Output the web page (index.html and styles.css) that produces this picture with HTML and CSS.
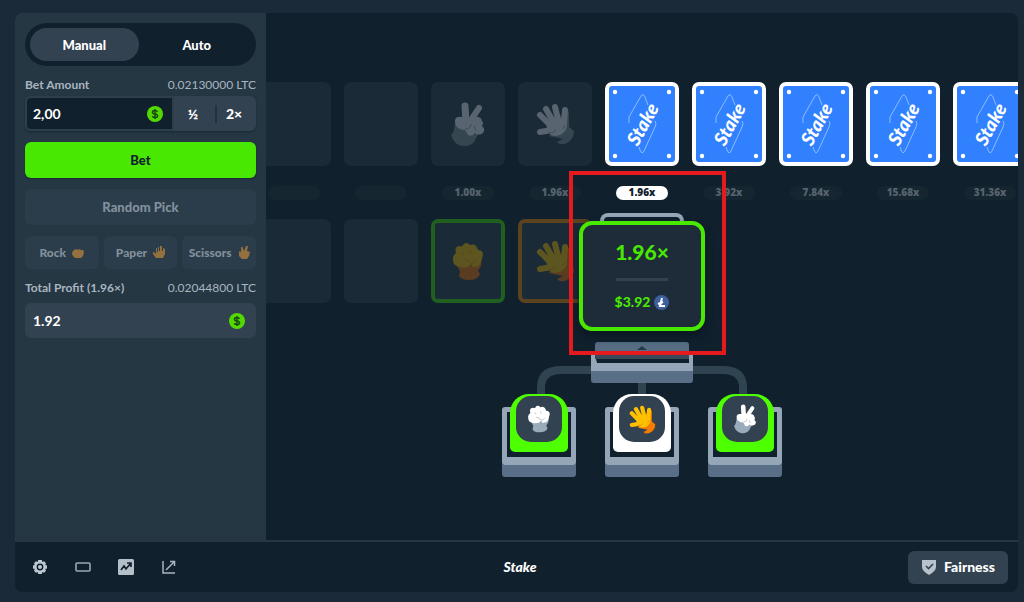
FILE: index.html
```
<!DOCTYPE html>
<html lang="en">
<head>
<meta charset="utf-8">
<meta name="viewport" content="width=device-width, initial-scale=1">
<title>Stake</title>
<link rel="stylesheet" href="styles.css">
</head>
<body>
<svg class="defs" aria-hidden="true">
  <symbol id="scissors" viewBox="0 0 35 45">
    <path class="wrist" d="M4 22L3 28Q2 32 0 33Q3 43 12 44Q22 45 25 36L29 30L25 22Z"/>
    <path class="stroke-hand" d="M14 4L15 20" stroke-width="7"/>
    <path class="stroke-hand" d="M28 6L20 18" stroke-width="6"/>
    <path class="hand" d="M4 18Q5 14 11 15L23 15Q30 14 31 19Q33 21 31 24Q35 27 32 31Q28 34 24 31Q21 35 17 33L14 28Q3 27 4 18Z"/>
    <path class="crease" d="M14 27Q20 27 20 22M23 24L25 29"/>
  </symbol>
  <symbol id="paper" viewBox="0 0 39 42">
    <path class="wrist" d="M27 9Q30 3 33 9L33 24L38 28Q38 36 31 40Q24 43 21 39L27 36L13 33Z"/>
    <path class="stroke-hand" d="M4 12L14 22M10 6L18 20M19 4L23 20M29 7L28 21M4 29L16 27" stroke-width="6"/>
    <path class="hand" d="M10 19L19 14L30 17L31 24Q28 33 18 33Q11 32 10 19Z"/>
    <path class="crease" d="M12 30Q17 31 20 27M27 26L29 22"/>
  </symbol>
  <symbol id="rock" viewBox="0 0 32 39">
    <path class="wrist" d="M3 20L30 15L29 24L26 29L28 32Q26 38 17 38Q9 38 7 34L8 29Z"/>
    <path class="hand" d="M1 18Q0 14 4 11Q2 4 8 4Q11 5 11 3Q14-1 18 3Q24 1 26 8Q31 8 31 13L29 20Q28 25 21 25L19 22Q15 27 8 25Q1 24 1 18Z"/>
    <path class="crease" d="M12 17Q17 17 18 21Q22 22 24 18M10 10L12 13M18 9L19 12"/>
  </symbol>
  <symbol id="card-back" viewBox="0 0 64 74">
    <g fill="#fff"><circle cx="5" cy="5" r="2.2"/><circle cx="59" cy="5" r="2.2"/><circle cx="5" cy="69" r="2.2"/><circle cx="59" cy="69" r="2.2"/></g>
    <path d="M19 36V30L31 9Q33 6 35 10L38 18M45 34Q47 36 45 40L34 64Q32 68 30 63L29 60" fill="none" stroke="#8ebcff" stroke-width="1"/>
  </symbol>
  <symbol id="dollar" viewBox="0 0 16 16">
    <circle cx="8" cy="8" r="8" fill="#54d900"/>
    <path d="M10.6 5.8Q9.8 4.5 8 4.5Q5.5 4.5 5.5 6.2Q5.5 7.6 8 8Q10.6 8.4 10.6 10Q10.6 11.6 8 11.6Q6 11.6 5.3 10.1M8 3V13" fill="none" stroke="#174a17" stroke-width="1.5"/>
  </symbol>
</svg>

<main class="app">
  <form class="sidebar">
    <div class="tabs">
      <button type="button" class="tab tab-active">Manual</button>
      <button type="button" class="tab">Auto</button>
    </div>
    <div class="field">
      <div class="field-head"><label for="bet">Bet Amount</label><span>0.02130000 LTC</span></div>
      <div class="bet-row">
        <div class="input-box"><input id="bet" type="text" value="2,00"><svg class="coin"><use href="#dollar"/></svg></div>
        <button type="button" class="step">½</button>
        <button type="button" class="step">2×</button>
      </div>
    </div>
    <button type="button" class="bet-button">Bet</button>
    <button type="button" class="muted random">Random Pick</button>
    <div class="picks">
      <button type="button" class="muted">Rock
        <svg class="emoji" viewBox="0 0 12 13"><path d="M0 8Q0 5 2 4L4 3L6 4L7 3L9 4L11 4L12 6L11 10L9 12H3L1 10Z"/></svg></button>
      <button type="button" class="muted">Paper
        <svg class="emoji" viewBox="0 0 12 13"><path d="M3 12L0 8V6H1L3 8V2H4V6H5V1H6V5H7V0H9V5H10V2L12 3V8L10 12Z"/></svg></button>
      <button type="button" class="muted">Scissors
        <svg class="emoji" viewBox="0 0 12 13"><path d="M1 5L3 6V1H4V0L6 5L8 0H10L9 5L12 6L11 10L9 13H4L1 10Z"/></svg></button>
    </div>
    <div class="field profit">
      <div class="field-head"><label for="profit">Total Profit (1.96×)</label><span>0.02044800 LTC</span></div>
      <div class="input-box readonly"><input id="profit" type="text" value="1.92" readonly><svg class="coin"><use href="#dollar"/></svg></div>
    </div>
  </form>

  <section class="game">
    <div class="strip">
      <div class="slot"><div class="card"></div><span class="pill"></span><div class="card"></div></div>
      <div class="slot"><div class="card"></div><span class="pill"></span><div class="card"></div></div>
      <div class="slot"><div class="card"><svg class="sign sign-scissors"><use href="#scissors"/></svg></div><span class="pill">1.00x</span><div class="card card-win"><svg class="sign sign-rock"><use href="#rock"/></svg></div></div>
      <div class="slot"><div class="card"><svg class="sign sign-paper"><use href="#paper"/></svg></div><span class="pill">1.96x</span><div class="card card-draw"><svg class="sign sign-paper"><use href="#paper"/></svg></div></div>
      <div class="slot"><div class="card card-back"><svg><use href="#card-back"/></svg><span class="back-word">Stake</span></div><span class="pill pill-active">1.96x</span></div>
      <div class="slot"><div class="card card-back"><svg><use href="#card-back"/></svg><span class="back-word">Stake</span></div><span class="pill">3.92x</span></div>
      <div class="slot"><div class="card card-back"><svg><use href="#card-back"/></svg><span class="back-word">Stake</span></div><span class="pill">7.84x</span></div>
      <div class="slot"><div class="card card-back"><svg><use href="#card-back"/></svg><span class="back-word">Stake</span></div><span class="pill">15.68x</span></div>
      <div class="slot"><div class="card card-back"><svg><use href="#card-back"/></svg><span class="back-word">Stake</span></div><span class="pill">31.36x</span></div>
    </div>

    <div class="machine">
      <div class="arch"></div>
      <div class="result">
        <strong class="multiplier">1.96×</strong>
        <span class="rule"></span>
        <div class="payout">$3.92
          <svg class="litecoin" viewBox="0 0 15 15"><circle cx="7.5" cy="7.5" r="7.5" fill="#3c5f9f"/><path d="M8 3L6 11H11M4 9L9 7" fill="none" stroke="#fff" stroke-width="2"/></svg>
        </div>
        <span class="highlight"></span>
      </div>
      <svg class="head" viewBox="0 0 210 52">
        <path d="M4 52V46Q4 28 24 28H186Q206 28 206 46V52M105 28V52" fill="none" stroke="#304350" stroke-width="8"/>
        <path d="M54 28H156V38Q156 41 153 41H57Q54 41 54 38Z" fill="#586f87"/>
        <path d="M54 13H156V29H54Z" fill="#94a6b8"/>
        <path d="M58 13H152V21H60Z" fill="#10202d"/>
        <path d="M58 3Q58 0 61 0H149Q152 0 152 3V13H58Z" fill="#566d84"/>
        <path d="M58 13H152V17H58Z" fill="#374a5a"/>
        <path d="M100 8L105 4L110 8Z" fill="#263746"/>
      </svg>
      <div class="pads">
        <div class="pad"><span class="base"></span><button type="button" class="key key-green" aria-label="Rock"><span class="face"><svg class="face-rock"><use href="#rock"/></svg></span></button></div>
        <div class="pad"><span class="base"></span><button type="button" class="key key-gold" aria-label="Paper"><span class="face"><svg class="face-paper"><use href="#paper"/></svg></span></button></div>
        <div class="pad"><span class="base"></span><button type="button" class="key key-green" aria-label="Scissors"><span class="face"><svg class="face-scissors"><use href="#scissors"/></svg></span></button></div>
      </div>
    </div>
  </section>

  <footer class="footer">
    <div class="tools">
      <button type="button" aria-label="Settings"><svg viewBox="0 0 16 16"><path fill="#bfc9d3" fill-rule="evenodd" d="M6.2 1H9.8L10.3 3L12 2.3L14 4.3L13.2 6L15 6.5V9.5L13.2 10L14 11.7L12 13.7L10.3 13L9.8 15H6.2L5.7 13L4 13.7L2 11.7L2.8 10L1 9.5V6.5L2.8 6L2 4.3L4 2.3L5.7 3ZM8 4.6A3.4 3.4 0 1 0 8 11.4A3.4 3.4 0 1 0 8 4.6ZM8 6A2 2 0 1 1 8 10A2 2 0 1 1 8 6Z"/></svg></button>
      <button type="button" aria-label="Theatre mode"><svg viewBox="0 0 16 16"><rect x="1" y="4" width="14" height="8" rx="1" fill="none" stroke="#9aa8b5" stroke-width="1.6"/></svg></button>
      <button type="button" aria-label="Live stats"><svg viewBox="0 0 16 16"><rect width="16" height="16" rx="1.5" fill="#b5bfc9"/><path d="M3 11L6 7L8 10L12.5 4.5M9 4H13V8" fill="none" stroke="#10202d" stroke-width="1.6"/></svg></button>
      <button type="button" aria-label="Share"><svg viewBox="0 0 16 16"><path d="M2 2V14H14M5 11L13 3M9 2.5H13.5V7" fill="none" stroke="#a9b5c0" stroke-width="1.5"/></svg></button>
    </div>
    <a class="logo" href="#">Stake</a>
    <button type="button" class="fairness"><svg viewBox="0 0 16 16"><path d="M1 1H15V8Q15 12 8 16Q1 12 1 8Z" fill="#b8c2cc"/><path d="M5 7L7.5 9.5L12 5" fill="none" stroke="#304350" stroke-width="1.6"/></svg>Fairness</button>
  </footer>
</main>
</body>
</html>
```
FILE: styles.css
```
* { box-sizing: border-box; }

body {
  margin: 0;
  min-height: 100vh;
  display: flex;
  padding: 13px 6px 10px 15px;
  background: #1b2a38;
  color: #fff;
  font: 12px/16px Lato, "Open Sans", sans-serif;
}

button, input { font: inherit; color: inherit; border: 0; margin: 0; padding: 0; background: none; }
button { font-weight: 900; cursor: pointer; }
svg { display: block; flex: none; }
.defs { position: absolute; width: 0; height: 0; }

.app {
  flex: 1;
  min-width: 0;
  display: grid;
  grid-template: 1fr auto / 251px minmax(0, 1fr);
  border-radius: 7px;
  overflow: hidden;
  background: #10202d;
}

/* Sidebar */
.sidebar {
  display: flex;
  flex-direction: column;
  gap: 11px;
  padding: 10px;
  background: #243743;
}
.tabs { display: grid; grid-template-columns: 1fr 1fr; padding: 5px; gap: 4px; border-radius: 22px; background: #10202d; }
.tab { height: 33px; border-radius: 17px; font-size: 13px; }
.tab-active { background: #324250; }
.field-head { display: flex; justify-content: space-between; height: 19px; color: #a9b5c0; }
.field-head label { font-weight: 700; }
.profit .field-head { height: 23px; }
.bet-row { display: flex; border-radius: 6px; background: #324250; box-shadow: 0 1px 2px #192834; }
.input-box {
  flex: 1;
  min-width: 0;
  display: flex;
  align-items: center;
  height: 35px;
  padding: 0 9px 0 6px;
  border: 2px solid #2d3e4c;
  border-radius: 6px 0 0 6px;
  background: #10202d;
}
.input-box input { flex: 1; min-width: 0; width: 0; font-size: 14px; font-weight: 700; }
.coin { width: 16px; height: 16px; }
.step { width: 41px; padding-right: 3px; font-size: 14px; }
.step + .step { background: linear-gradient(#203240, #203240) 0 50% / 2px 18px no-repeat; }
.bet-button { height: 36px; border-radius: 6px; background: #49e802; color: #10202d; font-size: 13px; box-shadow: 0 1px 2px #192834; }
.muted { height: 33px; border-radius: 6px; background: #2b3d4a; color: #82909d; }
.random { height: 36px; font-size: 13px; }
.picks { display: grid; grid-template-columns: repeat(3, 1fr); gap: 5px; }
.picks .muted { display: flex; align-items: center; justify-content: center; gap: 6px; }
.emoji { width: 12px; height: 13px; fill: #93703e; }
.input-box.readonly { border-color: #324250; background: #324250; border-radius: 6px; }

/* Round history */
.game { display: grid; overflow: hidden; }
.strip, .machine { grid-area: 1 / 1; min-width: 0; }
.strip { display: flex; justify-content: center; gap: 13px; padding-top: 69px; }
.slot { flex: none; width: 74px; display: flex; flex-direction: column; align-items: center; }
.card {
  width: 74px;
  height: 84px;
  display: grid;
  place-items: center;
  border-radius: 7px;
  background: #1b2a37;
  --hand: #58646f;
  --wrist: #364651;
  --crease: #3f4d58;
}
.card > * { grid-area: 1 / 1; }
.card-win, .card-draw { border: 4px solid #205f20; --hand: #5c5520; --wrist: #5a3d20; --crease: #5a4520; }
.card-draw { border-color: #5b4320; }
.card-back { border: 4px solid #fff; background: #3181ff; }
.card-back svg { width: 64px; height: 74px; }
.back-word { font-size: 19px; font-style: italic; font-weight: 900; transform: rotate(-61deg); }
.sign-scissors { width: 35px; height: 45px; }
.sign-paper { width: 39px; height: 42px; }
.sign-rock { width: 32px; height: 39px; }
.hand { fill: var(--hand); }
.wrist { fill: var(--wrist); }
.stroke-hand { fill: none; stroke: var(--hand); stroke-linecap: round; }
.crease { fill: none; stroke: var(--crease); stroke-width: 1; }
.pill {
  width: 52px;
  height: 14px;
  margin: 20px 0 19px;
  border-radius: 7px;
  background: #152631;
  color: #56626d;
  font: 800 10px/13px "Open Sans", sans-serif;
  text-align: center;
}
.pill-active { background: #fff; color: #10202d; }

/* Machine */
.machine { position: relative; display: flex; flex-direction: column; align-items: center; padding-top: 200px; }
.arch { width: 84px; height: 8px; border: 4px solid #94a6b8; border-bottom: 0; border-radius: 12px 12px 0 0; }
.result {
  position: relative;
  width: 126px;
  height: 110px;
  display: flex;
  flex-direction: column;
  align-items: center;
  justify-content: space-between;
  padding: 15px 0 17px;
  margin-bottom: 11px;
  border: 4px solid #49e802;
  border-radius: 13px;
  background: #1e2c39;
  color: #49e802;
  box-shadow: 0 5px 8px #0c1821;
}
.multiplier { font-size: 21px; line-height: 24px; font-weight: 900; }
.rule { width: 52px; height: 3px; background: #324250; }
.payout { display: flex; align-items: center; gap: 4px; font-size: 14px; font-weight: 900; }
.litecoin { width: 15px; height: 15px; }
.highlight { position: absolute; top: -54px; left: -14px; width: 157px; height: 184px; border: 4px solid #e51a1e; z-index: 2; }
.head { width: 210px; height: 52px; }
.pads { display: flex; gap: 29px; }
.pad { width: 74px; height: 83px; display: grid; justify-items: center; align-items: start; }
.pad > * { grid-area: 1 / 1; }
.base {
  width: 100%;
  height: 58px;
  margin-top: 13px;
  border: 5px solid #94a6b8;
  border-bottom-width: 8px;
  border-radius: 3px;
  box-shadow: 0 12px #586f87;
}
.key { width: 58px; height: 58px; display: grid; justify-items: center; padding-top: 2px; border-radius: 19px 19px 5px 5px; align-content: start; z-index: 1; }
.key-green { background: #4dff00; --hand: #fff; --wrist: #9aabbb; --crease: #a8b5c2; }
.key-gold { background: #fff; --hand: #ffc000; --wrist: #f47c00; --crease: #f47c00; }
.face { width: 46px; height: 46px; display: grid; place-items: center; border-radius: 15px; background: #324250; }
.face-rock { width: 24px; height: 28px; }
.face-paper { width: 27px; height: 29px; }
.face-scissors { width: 23px; height: 30px; }

/* Footer */
.footer {
  grid-column: 1 / -1;
  display: grid;
  grid-template-columns: 1fr auto 1fr;
  align-items: center;
  height: 52px;
  padding: 0 10px 0 17px;
  border-top: 2px solid #263643;
}
.tools { display: flex; gap: 27px; }
.tools button, .tools svg { width: 16px; height: 16px; }
.logo { color: #fff; font-size: 14px; font-weight: 900; font-style: italic; text-decoration: none; }
.fairness { justify-self: end; display: flex; align-items: center; gap: 7px; height: 33px; padding: 0 13px; border-radius: 6px; background: #324250; font-size: 14px; }
.fairness svg { width: 16px; height: 16px; }
```
